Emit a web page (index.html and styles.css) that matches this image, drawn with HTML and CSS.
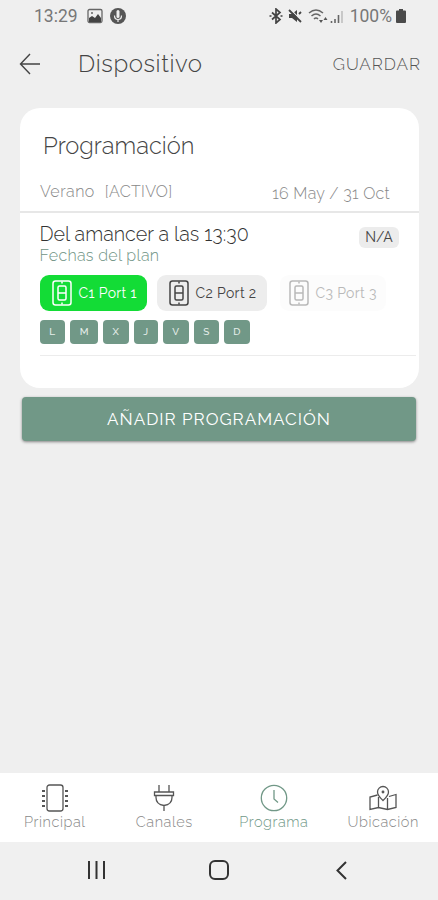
FILE: index.html
```html
<!DOCTYPE html>
<html lang="es">
<head>
    <meta charset="utf-8">
    <meta name="viewport" content="width=device-width, initial-scale=1">
    <title>Dispositivo</title>
    <link rel="stylesheet" href="styles.css">
</head>
<body>
    <svg class="sprite" aria-hidden="true">
        <symbol id="switch" viewBox="0 0 20 26">
            <rect x="1" y="1" width="18" height="24" rx="2.5"/>
            <rect x="6" y="6" width="8" height="14" rx="1.5"/>
            <path d="M6 13h8M10 1.5v2M10 22.5v2"/>
        </symbol>
    </svg>

    <div class="status-bar">
        <span class="time">13:29</span>
        <svg class="status-image" viewBox="0 0 16 16">
            <rect x="1" y="1.5" width="14" height="13" rx="1.5" fill="none" stroke="#666" stroke-width="1.3"/>
            <path d="M2 14v-4l3-2 3 2 3-4 3 4v4z" fill="#444"/>
            <circle cx="5" cy="5" r="1" fill="#666"/>
        </svg>
        <svg class="status-mic" viewBox="0 0 16 16">
            <circle cx="8" cy="8" r="8" fill="#555"/>
            <path d="M8 3.500v5" fill="none" stroke="#eee" stroke-width="3" stroke-linecap="round"/>
            <path d="M4.500 7.500q0 4 3.500 4t3.500-4M8 11.500V14" fill="none" stroke="#eee" stroke-width="1.2"/>
        </svg>
        <div class="status-right">
            <svg class="bluetooth" viewBox="0 0 14 16">
                <path d="M3 4.500l8 7-4 3.500V1l4 3.500-8 7M0.500 8h2M11.500 8h2" fill="none" stroke="#444" stroke-width="1.7"/>
            </svg>
            <svg class="mute" viewBox="0 0 14 16">
                <path d="M1 6h3l5-4v12l-5-4H1z" fill="#444"/>
                <path d="M2 1l12 12" stroke="#efefef" stroke-width="1.2"/>
                <path d="M1 2l12 12M11 6l2-2" stroke="#444" stroke-width="1.8"/>
            </svg>
            <svg class="wifi" viewBox="0 0 20 16">
                <path d="M1 5q7-6 14 0M3.500 8q4.500-4 9 0M6 11q2-2 4 0" fill="none" stroke="#666" stroke-width="1.500"/>
                <path d="M11 12h4l-2 3zM15.500 12h4l-2-3z" fill="#555"/>
            </svg>
            <svg class="signal" viewBox="0 0 14 16">
                <path d="M1.500 15v-2M5 15v-4M8.500 15V7" stroke="#666" stroke-width="1.6"/>
                <path d="M12 15V3" stroke="#c4c4c4" stroke-width="1.8"/>
            </svg>
            <span class="battery-level">100%</span>
            <svg class="battery" viewBox="0 0 10 16">
                <path d="M3 1h4v1.500h2q1 0 1 1V14q0 1-1 1H1q-1 0-1-1V3.500q0-1 1-1h2z" fill="#4a4a4a"/>
            </svg>
        </div>
    </div>

    <header class="header">
        <svg class="back" viewBox="0 0 22 22">
            <path d="M21 11H1.500M11 1L1.500 11 11 21"/>
        </svg>
        <h1>Dispositivo</h1>
        <span class="save">GUARDAR</span>
    </header>

    <main class="content">
        <section class="card">
            <h2>Programación</h2>
            <div class="season">
                <span class="season-name">Verano</span>
                <span class="season-state">[ACTIVO]</span>
                <span class="season-dates">16 May / 31 Oct</span>
            </div>
            <div class="plan">
                <div class="plan-top">
                    <div>
                        <div class="plan-title">Del amancer a las 13:30</div>
                        <div class="plan-subtitle">Fechas del plan</div>
                    </div>
                    <span class="badge">N/A</span>
                </div>
                <div class="ports">
                    <div class="port port-active"><svg><use href="#switch"/></svg><span>C1 Port 1</span></div>
                    <div class="port"><svg><use href="#switch"/></svg><span>C2 Port 2</span></div>
                    <div class="port port-disabled"><svg><use href="#switch"/></svg><span>C3 Port 3</span></div>
                </div>
                <div class="days">
                    <span>L</span>
                    <span>M</span>
                    <span>X</span>
                    <span>J</span>
                    <span>V</span>
                    <span>S</span>
                    <span>D</span>
                </div>
            </div>
        </section>
        <button class="add-button">AÑADIR PROGRAMACIÓN</button>
    </main>

    <nav class="tabs">
        <div class="tab">
            <svg viewBox="0 0 28 28">
                <rect x="6" y="1" width="16" height="26" rx="2.500"/>
                <path d="M1 7h3M1 12h3M1 17h3M1 22h3M24 7h3M24 12h3M24 17h3M24 22h3" stroke-width="2"/>
            </svg>
            <span>Principal</span>
        </div>
        <div class="tab">
            <svg viewBox="0 0 28 28">
                <path d="M9 1v7M19 1v7M4.500 8h19v3.500h-19zM6 11.500v2q0 7 8 8 8-1 8-8v-2M14 21.500V27"/>
            </svg>
            <span>Canales</span>
        </div>
        <div class="tab tab-active">
            <svg viewBox="0 0 28 28">
                <circle cx="14" cy="14" r="12.700"/>
                <path d="M14 6v9l4 3.500"/>
            </svg>
            <span>Programa</span>
        </div>
        <div class="tab">
            <svg viewBox="0 0 28 28">
                <path d="M8.500 11L1 13v12.500l8.500-2 9 2 8.500-2V10.500l-7 2M9.500 13v10.500M18.500 14v11.500"/>
                <path d="M14 16.500q-5.500-5-5.500-8.500a5.500 5.500 0 0 1 11 0q0 3.500-5.500 8.500z"/>
                <circle cx="14" cy="8" r=".8"/>
            </svg>
            <span>Ubicación</span>
        </div>
    </nav>

    <div class="system-nav">
        <svg viewBox="0 0 20 20"><path d="M3 1v18M10.500 1v18M18 1v18"/></svg>
        <svg viewBox="0 0 20 20"><rect x="1" y="1" width="18" height="18" rx="5"/></svg>
        <svg viewBox="0 0 20 20"><path d="M14 2L5.500 10.500 14 19"/></svg>
    </div>
</body>
</html>
```
FILE: styles.css
```css
* {
    box-sizing: border-box;
}

body {
    display: flex;
    flex-direction: column;
    height: 900px;
    margin: 0;
    background: #efefef;
    color: #444;
    font-family: Raleway, Lato, sans-serif;
    font-weight: 300;
}

svg {
    display: block;
    flex-shrink: 0;
}

.sprite {
    display: none;
}

.status-bar {
    display: flex;
    align-items: center;
    height: 32px;
    padding: 0 32px 0 34px;
    font-family: Roboto, sans-serif;
    font-weight: 400;
    font-size: 17.5px;
    color: #777;
}

.status-image {
    width: 16px;
    height: 16px;
    margin-left: 9px;
}

.status-mic {
    width: 16px;
    height: 16px;
    margin-left: 7px;
}

.status-right {
    display: flex;
    align-items: center;
    margin-left: auto;
}

.bluetooth, .mute, .signal {
    width: 14px;
    height: 16px;
}

.mute {
    margin-left: 5px;
}

.wifi {
    width: 20px;
    height: 16px;
    margin-left: 6px;
}

.signal {
    margin-left: 2px;
}

.battery-level {
    margin-left: 6px;
}

.battery {
    width: 10px;
    height: 16px;
    margin-left: 4px;
}

.header {
    display: flex;
    align-items: center;
    height: 64px;
    padding: 0 17px 0 19px;
}

.back {
    width: 22px;
    height: 22px;
    fill: none;
    stroke: #444;
    stroke-width: 1.4;
}

h1 {
    margin: -2px 0 0 37px;
    font-size: 24px;
    font-weight: 300;
    letter-spacing: 0.6px;
}

.save {
    margin-left: auto;
    color: #555;
    font-size: 17px;
    letter-spacing: 1px;
}

.content {
    flex: 1;
    padding: 12px 19px 0 20px;
}

.card {
    height: 280px;
    padding-top: 23px;
    border-radius: 20px;
    background: #fff;
}

h2 {
    margin: 0 0 0 23px;
    font-size: 23.7px;
    line-height: 30px;
    font-weight: 300;
}

.season {
    display: flex;
    height: 52px;
    padding: 21px 29px 0 20px;
    border-bottom: 2px solid #e7e7e7;
    color: #888;
    font-size: 16px;
    line-height: 20px;
    letter-spacing: 0.3px;
}

.season-name {
    letter-spacing: 0.5px;
}

.season-state {
    margin-left: 10px;
}

.season-dates {
    margin: 2px 0 0 auto;
}

.plan {
    height: 143px;
    margin: 0 3px 0 19.5px;
    padding-top: 9px;
    border-bottom: 1px solid #ececec;
}

.plan-top {
    display: flex;
    align-items: flex-start;
    justify-content: space-between;
    padding-right: 17px;
}

.plan-title {
    color: #333;
    font-size: 19.7px;
    line-height: 25px;
}

.plan-subtitle {
    color: #6f9384;
    font-size: 16px;
    line-height: 18px;
    letter-spacing: 0.3px;
}

.badge {
    height: 21px;
    width: 40px;
    margin-top: 5px;
    border-radius: 6px;
    background: #ececec;
    color: #444;
    font-size: 14px;
    font-weight: 400;
    line-height: 21px;
    text-align: center;
}

.ports {
    display: flex;
    gap: 10px;
    margin-top: 10px;
}

.port {
    display: flex;
    align-items: center;
    gap: 7px;
    width: 110px;
    height: 36px;
    padding-left: 12px;
    border-radius: 9px;
    background: #ededed;
    color: #444;
    font-size: 14px;
    font-weight: 400;
    letter-spacing: 0.35px;
    white-space: nowrap;
}

.port svg {
    width: 20px;
    height: 26px;
    fill: none;
    stroke: currentColor;
    stroke-width: 1.5;
}

.port-active {
    width: 107px;
    background: #13dc36;
    color: #fff;
}

.port-disabled {
    width: 106px;
    margin-left: 3px;
    padding-left: 9px;
    background: #fcfcfc;
    color: #b9b9b9;
}

.days {
    display: flex;
    gap: 5px;
    margin-top: 9px;
}

.days span {
    width: 25.5px;
    height: 24px;
    border-radius: 4px;
    background: #719887;
    color: #e6eeea;
    font-size: 10px;
    font-weight: 500;
    line-height: 24px;
    text-align: center;
}

.days span:nth-child(2) {
    width: 28px;
}

.days span:nth-child(4) {
    width: 24.5px;
}

.add-button {
    display: block;
    width: 394px;
    height: 44px;
    margin: 9px 0 0 2px;
    padding: 0;
    border: none;
    border-radius: 4px;
    background: #719887;
    box-shadow: 0 1px 3px rgba(0, 0, 0, 0.45);
    color: #fff;
    font-family: inherit;
    font-size: 17px;
    font-weight: 400;
    letter-spacing: 1px;
}

.tabs {
    display: grid;
    grid-template-columns: repeat(4, 1fr);
    height: 69px;
    background: #fff;
}

.tab {
    display: flex;
    flex-direction: column;
    align-items: center;
    padding-top: 11px;
    color: #888;
    font-size: 14.5px;
    line-height: 20px;
    letter-spacing: 0.55px;
}

.tab svg {
    width: 28px;
    height: 28px;
    fill: none;
    stroke: #555;
    stroke-width: 1.3;
}

.tab-active {
    color: #719887;
}

.tab-active svg {
    stroke: #719887;
}

.system-nav {
    display: flex;
    justify-content: space-between;
    height: 58px;
    padding: 18px 86px;
    background: #f0f0f0;
}

.system-nav svg {
    width: 20px;
    height: 20px;
    fill: none;
    stroke: #333;
    stroke-width: 2;
}
```
